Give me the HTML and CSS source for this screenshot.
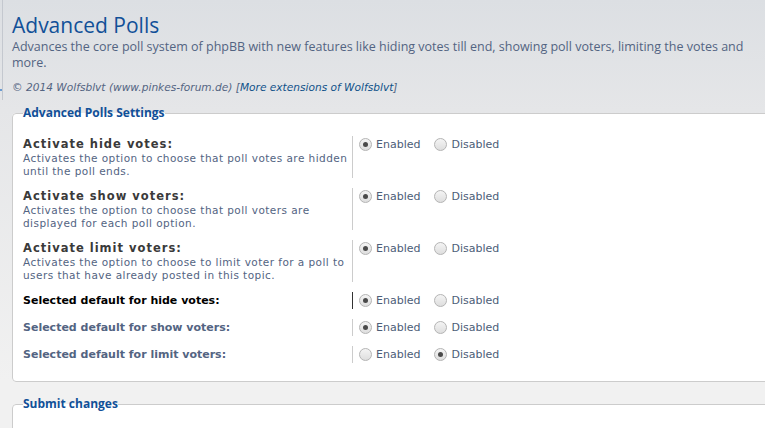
FILE: index.html
```html
<!DOCTYPE html>
<html lang="en">

<head>
    <meta charset="UTF-8">
    <meta name="viewport" content="width=device-width, initial-scale=1.0">
    <title>Advanced Polls</title>
    <link rel="stylesheet" href="styles.css">
</head>

<body>
    <div class="page">
        <!-- Borde del menú lateral -->
        <div class="menu-edge"></div>

        <div class="main">
            <h1>Advanced Polls</h1>
            <p class="intro">Advances the core poll system of phpBB with new features like hiding votes till end, showing poll voters, limiting the votes and more.</p>
            <p class="copyright">&copy; 2014 Wolfsblvt (www.pinkes-forum.de) [<a href="#">More extensions of Wolfsblvt</a>]</p>

            <!-- Ajustes -->
            <form id="pollSettings">
                <fieldset>
                    <legend>Advanced Polls Settings</legend>
                    <dl>
                        <dt><label for="hideVotes">Activate hide votes:</label><span class="explain">Activates the option to choose that poll votes are hidden until the poll ends.</span></dt>
                        <dd>
                            <label><input type="radio" id="hideVotes" name="hide_votes" value="1" checked> Enabled</label>
                            <label><input type="radio" name="hide_votes" value="0"> Disabled</label>
                        </dd>
                    </dl>
                    <dl>
                        <dt><label for="showVoters">Activate show voters:</label><span class="explain">Activates the option to choose that poll voters are displayed for each poll option.</span></dt>
                        <dd>
                            <label><input type="radio" id="showVoters" name="show_voters" value="1" checked> Enabled</label>
                            <label><input type="radio" name="show_voters" value="0"> Disabled</label>
                        </dd>
                    </dl>
                    <dl>
                        <dt><label for="limitVoters">Activate limit voters:</label><span class="explain">Activates the option to choose to limit voter for a poll to users that have already posted in this topic.</span></dt>
                        <dd>
                            <label><input type="radio" id="limitVoters" name="limit_voters" value="1" checked> Enabled</label>
                            <label><input type="radio" name="limit_voters" value="0"> Disabled</label>
                        </dd>
                    </dl>
                    <dl class="hover">
                        <dt class="single"><label for="defHide">Selected default for hide votes:</label></dt>
                        <dd>
                            <label><input type="radio" id="defHide" name="def_hide" value="1" checked> Enabled</label>
                            <label><input type="radio" name="def_hide" value="0"> Disabled</label>
                        </dd>
                    </dl>
                    <dl>
                        <dt class="single"><label for="defShow">Selected default for show voters:</label></dt>
                        <dd>
                            <label><input type="radio" id="defShow" name="def_show" value="1" checked> Enabled</label>
                            <label><input type="radio" name="def_show" value="0"> Disabled</label>
                        </dd>
                    </dl>
                    <dl>
                        <dt class="single"><label for="defLimit">Selected default for limit voters:</label></dt>
                        <dd>
                            <label><input type="radio" id="defLimit" name="def_limit" value="1"> Enabled</label>
                            <label><input type="radio" name="def_limit" value="0" checked> Disabled</label>
                        </dd>
                    </dl>
                </fieldset>

                <fieldset class="submit-buttons">
                    <legend>Submit changes</legend>
                </fieldset>
            </form>
        </div>
    </div>
</body>

</html>
```

FILE: styles.css
```css
/* Estilo general */
body {
    margin: 0;
    padding: 0;
    font-family: "DejaVu Sans", Verdana, sans-serif;
    font-size: 10px;
    color: #536482;
    background: linear-gradient(#dcdfe3, #e5e6e8 110px, #f1f1f1 380px);
    overflow: hidden;
    height: 428px;
}

.page {
    display: flex;
    align-items: flex-start;
}

.menu-edge {
    width: 2px;
    height: 100px;
    flex-shrink: 0;
    border-right: 1px solid #c4c8cf;
    background: linear-gradient(transparent 89px, #6a9bd1 89px, #6a9bd1 91px, transparent 91px);
}

.main {
    flex: 1;
    min-width: 0;
    padding: 11px 0 0 9px;
}

h1 {
    margin: 0;
    font-family: "Open Sans", sans-serif;
    font-size: 21px;
    font-weight: normal;
    line-height: 28px;
    color: #115098;
}

.intro {
    margin: 0;
    padding-right: 6px;
    font-family: "Open Sans", sans-serif;
    font-size: 12.5px;
    line-height: 16px;
    color: #536482;
}

.copyright {
    margin: 9px 0 0;
    font-style: italic;
    font-size: 10.6px;
    line-height: 14px;
    color: #536482;
}

.copyright a {
    color: #105289;
    text-decoration: none;
}

form {
    margin-top: 11px;
}

fieldset {
    margin: 0 -8px 0 0;
    padding: 10px 10px 13px;
    border: 1px solid #cccccc;
    border-radius: 4px;
    background-color: #fff;
}

legend {
    padding: 0;
    font-family: "Open Sans", sans-serif;
    font-size: 12px;
    font-weight: bold;
    line-height: 16px;
    color: #115098;
}

.submit-buttons {
    margin-top: 14px;
    padding-bottom: 0;
    height: 24px;
}

dl {
    display: flex;
    margin: 0;
    padding: 5px 0;
}

dt {
    width: 329px;
    flex-shrink: 0;
    border-right: 1px solid #cccccc;
}

dt label {
    display: block;
    font-weight: bold;
    font-size: 11.5px;
    letter-spacing: 1px;
    line-height: 16px;
    color: #3a3a3a;
}

dt.single label {
    font-size: 11px;
    letter-spacing: 0;
    line-height: 17px;
    color: #536482;
}

.hover dt {
    border-right-color: #333;
}

.hover dt label {
    color: #000;
}

.explain {
    display: block;
    font-size: 10.5px;
    letter-spacing: 0.45px;
    line-height: 13px;
    color: #536482;
}

dd {
    margin: 0 0 0 6px;
    display: flex;
    align-items: center;
    gap: 14px;
    height: 16px;
}

dl:has(.single) dd {
    height: 17px;
}

dd label {
    display: flex;
    align-items: center;
    gap: 4px;
    font-size: 11px;
    color: #4c5d77;
}

input[type="radio"] {
    appearance: none;
    margin: 0;
    width: 13px;
    height: 13px;
    border: 1px solid #b4b4b4;
    border-radius: 50%;
    background: linear-gradient(#f4f4f4, #dedede);
    display: grid;
    place-content: center;
}

input[type="radio"]:checked::before {
    content: "";
    width: 5px;
    height: 5px;
    border-radius: 50%;
    background-color: #4a4a4a;
}
```
